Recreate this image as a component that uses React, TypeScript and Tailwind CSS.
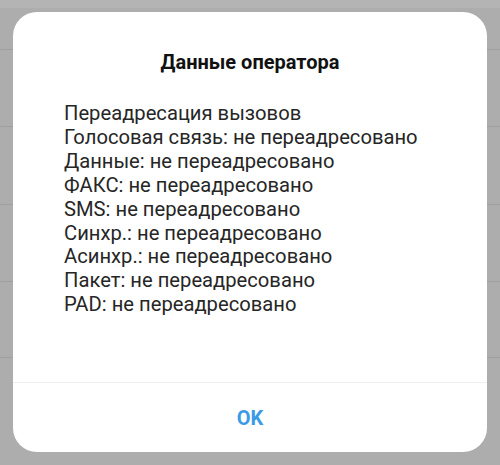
const rows = [
  'Переадресация вызовов',
  'Голосовая связь: не переадресовано',
  'Данные: не переадресовано',
  'ФАКС: не переадресовано',
  'SMS: не переадресовано',
  'Синхр.: не переадресовано',
  'Асинхр.: не переадресовано',
  'Пакет: не переадресовано',
  'PAD: не переадресовано',
]

export default function App() {
  return (
    <div className="relative h-[465px] w-[500px] overflow-hidden bg-[#adadad] font-['Roboto',sans-serif]">
      {/* dimmed list behind the dialog */}
      <div className="absolute inset-0 flex flex-col">
        <div className="h-[8px] bg-[#b4b4b4]" />
        <div className="h-[42px] border-b border-[#9f9f9f]" />
        <div className="h-[77px] border-b border-[#9f9f9f]" />
        <div className="h-[78px] border-b border-[#9f9f9f]" />
        <div className="h-[77px] border-b border-[#9f9f9f]" />
        <div className="h-[76px] border-b border-[#9f9f9f]" />
      </div>

      <div className="absolute left-[13px] top-[12px] flex h-[440px] w-[474px] flex-col rounded-[24px] bg-white">
        <h2 className="pt-[38px] text-center text-[20px] font-bold leading-[24px] text-[#111]">
          Данные оператора
        </h2>
        <div className="flex-1 pl-[51px] pt-[28px] text-[20.2px] leading-[23.9px] text-[#262626]">
          {rows.map((r) => (
            <div key={r}>{r}</div>
          ))}
        </div>
        <div className="h-px bg-[#eeeeee]" />
        <button className="flex h-[69px] items-center justify-center text-[20px] font-bold text-[#3b9ae6]">
          OK
        </button>
      </div>
    </div>
  )
}
